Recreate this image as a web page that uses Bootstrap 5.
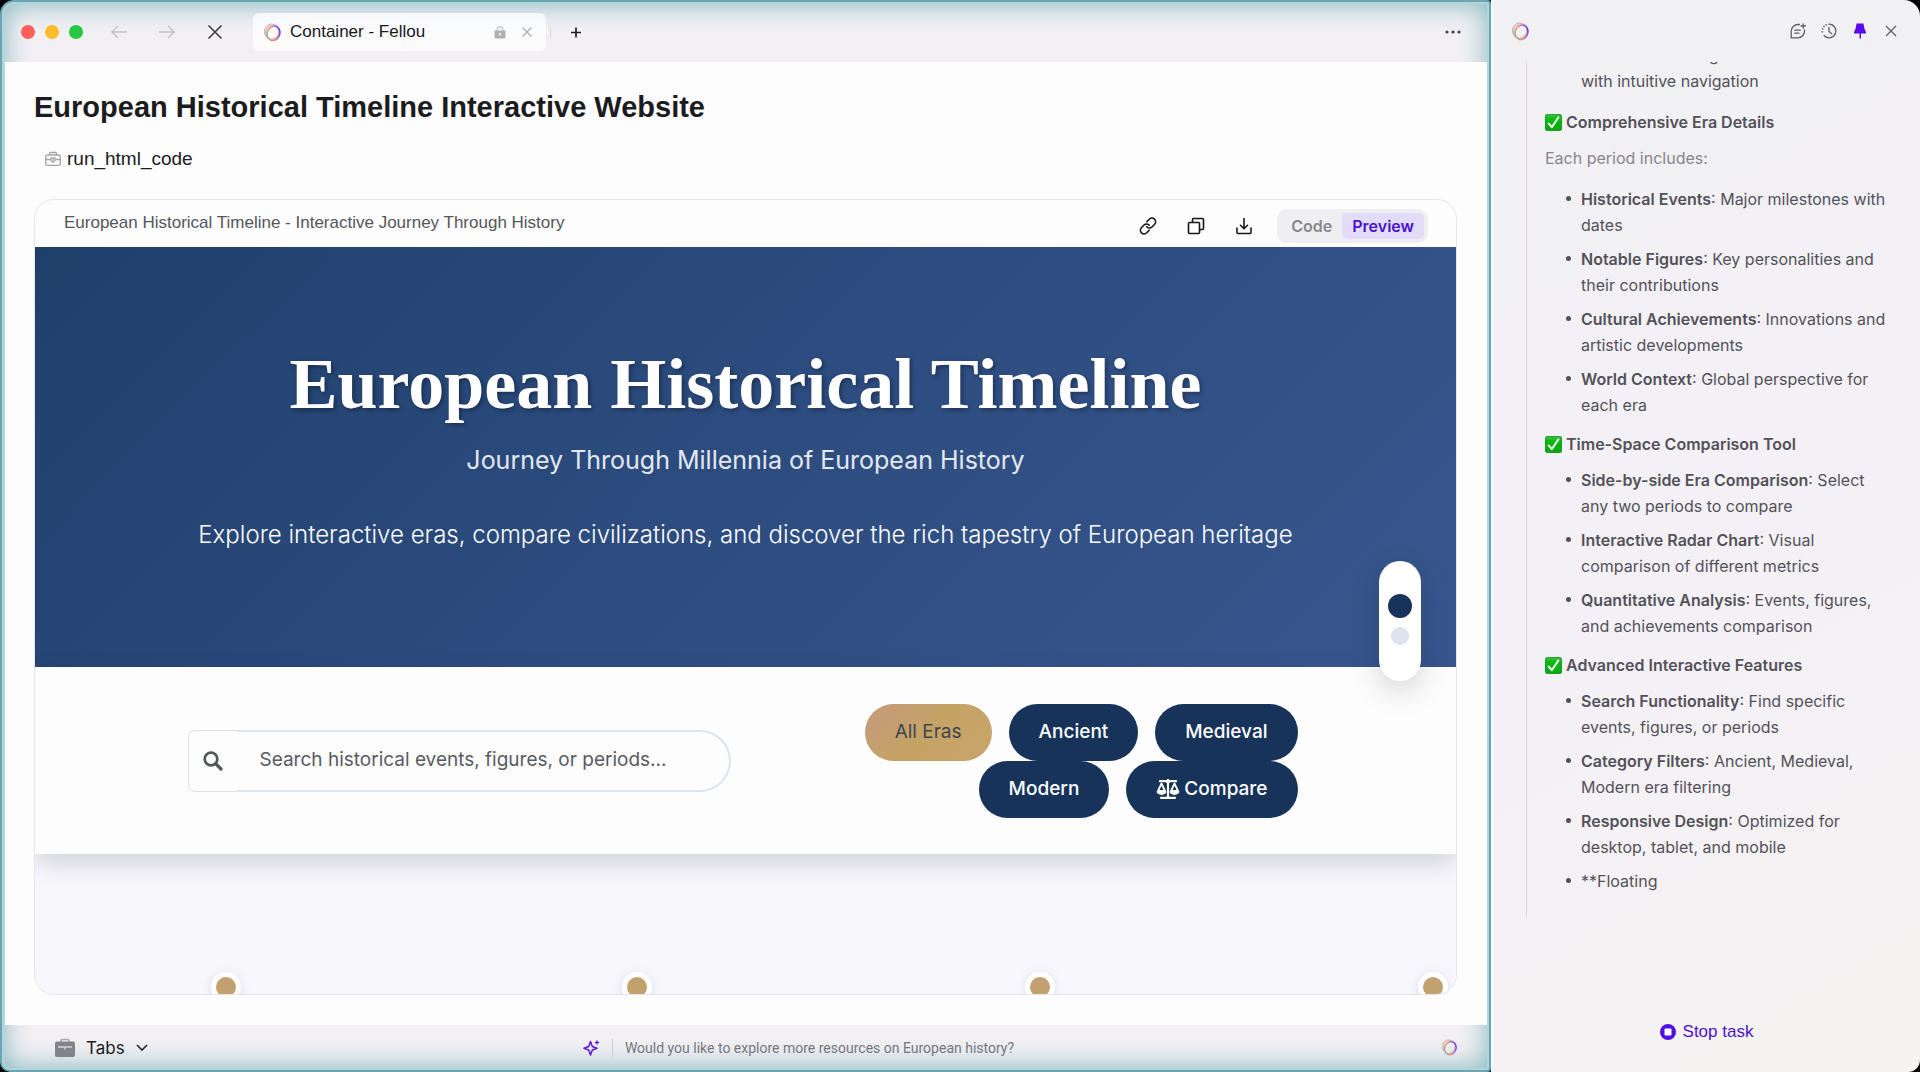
<!DOCTYPE html>
<html lang="en">
<head>
<meta charset="utf-8">
<meta name="viewport" content="width=device-width, initial-scale=1">
<title>Container - Fellou</title>
<link href="https://cdn.jsdelivr.net/npm/bootstrap@5.3.0/dist/css/bootstrap.min.css" rel="stylesheet">
<style>
  :root { --teal: #66a7b4; --navy: #18335a; --violet: #4a12cf; --ui: "Liberation Sans", Arial, sans-serif; --inter: Inter, "Noto Sans", sans-serif; }
  body { background: #000; font-family: var(--ui); color: #1b1b20; }
  button { font-family: inherit; }
  .shell { height: 100vh; }
  svg { display: block; flex: none; }
  .plain { border: 0; background: none; padding: 0; color: inherit; display: flex; align-items: center; justify-content: center; }

  /* browser window */
  .window { border: 2px solid var(--teal); border-radius: 14px 4px 4px 10px; background: #f2f0f3; box-shadow: inset 0 0 0 2px #b7d3d7, inset 0 0 26px 3px #86b9c2; padding: 0 2px 0 3px; }
  .topbar { height: 60px; padding: 0 26px 0 16px; }
  .lights { gap: 10px; }
  .lights i { width: 14px; height: 14px; border-radius: 50%; }
  .nav-icons { gap: 32px; margin-left: 28px; }
  .tab-item { width: 293px; height: 38px; margin-left: 30px; padding: 0 14px 0 10px; border-radius: 6px; background: rgba(255,255,255,.75); font-size: 17px; color: #17171c; }
  .tab-sep { width: 1px; height: 12px; background: #dcdade; margin: 0 18px 0 4px; }
  .viewport { background: #fdfdfd; padding: 27px 30px 30px 29px; }
  .page-title { font-size: 29px; line-height: 36px; font-weight: 700; margin: 0 0 21px; }
  .tool-line { font-size: 19px; line-height: 26px; gap: 6px; padding-left: 11px; margin-bottom: 27px; }

  /* preview frame */
  .frame { border: 1px solid #e6e6ea; border-radius: 20px; background: #fdfdfd; }
  .frame-head { height: 47px; padding: 0 28px 0 29px; flex: none; }
  .frame-name { font-size: 17px; color: #55555c; padding-bottom: 2px; }
  .frame-tools { gap: 30px; padding-top: 4px; }
  .toggle { background: #efeff2; border-radius: 10px; padding: 4px; margin-left: -6px; height: 34px; }
  .toggle .btn { border: 0; font: 600 16px/24px var(--inter); padding: 1px 10px; color: #88888f; border-radius: 5px; }
  .toggle .btn.active { background: #e2dcfa; color: var(--violet); }

  .hero { height: 420px; padding-bottom: 24px; flex: none; background: linear-gradient(135deg, #1f3f6b 0%, #2a4a7c 40%, #38578f 100%); color: #fff; font-family: var(--inter); text-align: center; }
  .hero h2 { font: 700 72px/90px "Liberation Serif", "Times New Roman", serif; margin: 0 0 14px; text-shadow: 2px 2px 4px rgba(0,0,0,.35); }
  .hero-sub { font-size: 25px; line-height: 34px; font-weight: 400; color: #e4e8f0; margin: 0 0 41px; }
  .hero-text { font-size: 24px; line-height: 34px; font-weight: 300; margin: 0; }
  .float-nav { position: absolute; right: 35px; bottom: -14px; width: 42px; height: 120px; padding-bottom: 3px; border-radius: 21px; background: #fff; box-shadow: 0 10px 30px rgba(0,0,0,.16); gap: 9px; z-index: 2; }
  .float-nav button { width: 18px; height: 18px; border-radius: 50%; border: 0; padding: 0; background: #dde4ee; }
  .float-nav button.on { width: 24px; height: 24px; background: var(--navy); }

  .controls { height: 187px; flex: none; padding: 0 30px 0 24px; background: #fdfdfe; box-shadow: 0 10px 24px rgba(40,40,70,.18); font-family: var(--inter); z-index: 1; }
  .controls-in { max-width: 1110px; gap: 24px; }
  .search { height: 62px; }
  .search .input-group-text { width: 49px; justify-content: center; background: #fdfdfe; border: 1px solid #e0e1e7; border-right: 0; border-radius: 7px 0 0 7px; color: #55575e; padding: 0; }
  .search .form-control { border: 2px solid #dde4ee; border-left: 0; border-radius: 0 31px 31px 0; padding: 0 23px; font-size: 19px; margin-left: 0 !important; background: #fdfdfe; }
  .search .form-control::placeholder { color: #585b61; opacity: 1; }
  .filters { column-gap: 17px; }
  .filters .btn { height: 57px; border: 0; border-radius: 29px; padding: 0 30px; background: var(--navy); color: #fff; font: 500 19px/28px var(--inter); }
  .filters .btn.gold { background: linear-gradient(135deg, #c49a7d, #c5a365 50%, #c8a469); color: #3d4651; font-weight: 400; }

  .track { background: #f8f8fc; display: grid; grid-template-columns: 411fr 402fr 393fr 38fr; align-items: end; padding-left: 176px; }
  .track i { width: 30px; height: 30px; border-radius: 50%; background: #c3a06f; border: 5px solid #fff; box-shadow: 0 2px 12px rgba(90,80,160,.18); margin-bottom: -8px; }

  .dock { height: 45px; padding: 0 29px 0 50px; display: grid; grid-template-columns: 1fr auto 1fr; align-items: center; }
  .dock-tabs { gap: 11px; font: 400 17px/24px var(--inter); }
  .dock-tip { gap: 12px; font: 400 14px/24px Roboto, sans-serif; color: #77767e; margin-left: 84px; }
  .dock-tip b { width: 1px; height: 18px; background: #cfccd4; }

  /* assistant panel */
  .assistant { width: 429px; border-left: 2px solid #f9f8fa; border-radius: 0 16px 12px 0; background: linear-gradient(150deg, #f1f0f2, #f3f1f6 50%, #f6f3f2); font-family: var(--inter); color: #535159; }
  .as-head { height: 62px; padding: 0 21px 0 18px; color: #5f5d68; }
  .as-icons { gap: 15px; }
  .as-log { margin-left: 33px; padding: 0 26px 23px 18px; border-left: 1px solid #d9cdf0; min-height: 0; }
  .as-log h3 { font-size: 16px; line-height: 26px; font-weight: 600; gap: 4px; margin: 13px 0 10px; display: flex; align-items: center; }
  .as-log p { font-size: 16px; line-height: 26px; margin: 0 0 15px; color: #88868c; }
  .as-log ul { margin: 0; padding-left: 36px; font-size: 16px; line-height: 26px; list-style: none; }
  .as-log li { position: relative; margin-bottom: 8px; }
  .as-log li:last-child { margin-bottom: 0; }
  .as-log ul.dots li::before { content: ""; position: absolute; left: -15px; top: 10px; width: 5px; height: 5px; border-radius: 50%; background: #535159; }
  .as-log strong { font-weight: 600; }
  .as-log ul.carry { margin-bottom: 2px; }
  .cut { padding-left: 128px; display: block; }
  .as-foot { height: 155px; padding-bottom: 27px; }
  .stop { font: 400 17px/26px var(--ui); color: var(--violet); gap: 7px; }
</style>
<script src="https://cdn.jsdelivr.net/npm/bootstrap@5.3.0/dist/js/bootstrap.bundle.min.js"></script>
</head>
<body>
<svg width="0" height="0" class="position-absolute" aria-hidden="true">
  <defs>
    <linearGradient id="lg" x1="1" y1="0" x2="0" y2="1"><stop offset="0" stop-color="#5a14d0"/><stop offset=".35" stop-color="#a274dc"/><stop offset=".65" stop-color="#ee9a62"/><stop offset="1" stop-color="#4cc0ec"/></linearGradient>
    <linearGradient id="gr" x1="0" y1="0" x2="0" y2="1"><stop offset="0" stop-color="#3bbf45"/><stop offset=".3" stop-color="#06b90c"/><stop offset="1" stop-color="#08a812"/></linearGradient>
    <symbol id="logo" viewBox="0 0 20 20"><g fill="none"><ellipse cx="9" cy="9" rx="7.6" ry="8" stroke="#b8a9bb" stroke-width=".9"/><ellipse cx="9.6" cy="9.6" rx="7" ry="8" transform="rotate(25 10 10)" stroke="#e7b08e" stroke-width="1"/><ellipse cx="11" cy="10.8" rx="6.6" ry="7.8" transform="rotate(22 11 10.8)" stroke="url(#lg)" stroke-width="1.7"/></g></symbol>
    <symbol id="tick" viewBox="0 0 17 17"><rect width="17" height="17" rx="2.5" fill="#1f9a2b"/><rect x=".8" y=".8" width="15.4" height="15.4" rx="2" fill="url(#gr)"/><path d="M3.6 9.4 6.8 13.2 13.4 3.4" fill="none" stroke="#fff" stroke-width="1.9" stroke-linecap="round" stroke-linejoin="round"/></symbol>
  </defs>
</svg>
<div class="shell d-flex overflow-hidden">
  <main class="window flex-grow-1 d-flex flex-column overflow-hidden">
    <header class="topbar d-flex align-items-center flex-shrink-0">
      <div class="lights d-flex"><i style="background:#fe5f57"></i><i style="background:#fdbc2e"></i><i style="background:#27c840"></i></div>
      <nav class="nav-icons d-flex align-items-center">
        <button class="plain" aria-label="Back"><svg width="16" height="16" fill="none" stroke="#c3c1c6" stroke-width="1.4"><path d="M16 8H1M7 2 1 8l6 6"/></svg></button>
        <button class="plain" aria-label="Forward"><svg width="16" height="16" fill="none" stroke="#c3c1c6" stroke-width="1.4"><path d="M0 8h15M9 2l6 6-6 6"/></svg></button>
        <button class="plain" aria-label="Stop loading"><svg width="16" height="16" fill="none" stroke="#3f3e44" stroke-width="1.6"><path d="m1.500 1.500 13 13m0-13-13 13"/></svg></button>
      </nav>
      <div class="tab-item d-flex align-items-center">
        <svg width="19" height="19" class="me-2"><use href="#logo"/></svg>
        <span class="flex-grow-1">Container - Fellou</span>
        <svg width="12" height="13" class="me-3" viewBox="0 0 12 13"><rect x=".5" y="4.500" width="11" height="8" rx="1" fill="#b3b0b4"/><path d="M3 5V3.500a3 3 0 0 1 6 0V5" fill="none" stroke="#b3b0b4"/><path d="M6 7v3M5 8h2" stroke="#fff"/></svg>
        <button class="plain" aria-label="Close tab"><svg width="10" height="10" fill="none" stroke="#aaa8ad" stroke-width="1.2"><path d="m.5.5 9 9m0-9-9 9"/></svg></button>
      </div>
      <span class="tab-sep"></span>
      <button class="plain" aria-label="New tab"><svg width="14" height="14" viewBox="0 0 14 14" fill="none" stroke="#222127" stroke-width="1.700"><path d="M7 2.500v10M2 7.500h10"/></svg></button>
      <button class="plain ms-auto" aria-label="More"><svg width="16" height="6" fill="#46454b"><circle cx="2" cy="3" r="1.600"/><circle cx="8" cy="3" r="1.600"/><circle cx="14" cy="3" r="1.600"/></svg></button>
    </header>

    <section class="viewport flex-grow-1 d-flex flex-column overflow-hidden">
      <h1 class="page-title">European Historical Timeline Interactive Website</h1>
      <div class="tool-line d-flex align-items-center">
        <svg width="16" height="16" viewBox="0 0 16 16" fill="none" stroke="#a5a3a8" stroke-width="1.300"><rect x=".7" y="4" width="14.600" height="10.300" rx="1.500"/><path d="M4.500 4V2.500a1 1 0 0 1 1-1h5a1 1 0 0 1 1 1V4M1 8.500h4.500m5 0H15"/><path d="M6 7h4v2.500l-2 1.700-2-1.700zM8 8v1.500"/></svg>
        <span>run_html_code</span>
      </div>

      <article class="frame flex-grow-1 d-flex flex-column overflow-hidden">
        <div class="frame-head d-flex align-items-center justify-content-between">
          <span class="frame-name">European Historical Timeline - Interactive Journey Through History</span>
          <div class="frame-tools d-flex align-items-center">
            <button class="plain" aria-label="Copy link"><svg width="18" height="18" viewBox="0 0 18 18" fill="none" stroke="#17171b" stroke-width="1.600" stroke-linecap="round"><path d="M7.800 4.800 10.300 2.300a3.600 3.600 0 0 1 5.300 5L13 10a3.600 3.600 0 0 1-5.300-.2"/><path d="M10.200 13.200 7.700 15.700a3.600 3.600 0 0 1-5.300-5L5 8a3.600 3.600 0 0 1 5.300.2"/></svg></button>
            <button class="plain" aria-label="Duplicate"><svg width="18" height="18" viewBox="0 0 18 18" fill="none" stroke="#17171b" stroke-width="1.600"><rect x="1.500" y="5.500" width="11" height="11" rx="1"/><path d="M5.500 5V2.500a1 1 0 0 1 1-1h9a1 1 0 0 1 1 1v9a1 1 0 0 1-1 1H13"/></svg></button>
            <button class="plain" aria-label="Download"><svg width="18" height="18" viewBox="0 0 18 18" fill="none" stroke="#17171b" stroke-width="1.600" stroke-linecap="round"><path d="M9 1.500v10M5.500 8.300 9 11.700l3.500-3.400M2 11v4.500a1 1 0 0 0 1 1h12a1 1 0 0 0 1-1V11"/></svg></button>
            <div class="toggle d-flex"><button class="btn">Code</button><button class="btn active">Preview</button></div>
          </div>
        </div>
        <div class="hero position-relative d-flex flex-column justify-content-center">
          <h2>European Historical Timeline</h2>
          <p class="hero-sub">Journey Through Millennia of European History</p>
          <p class="hero-text">Explore interactive eras, compare civilizations, and discover the rich tapestry of European heritage</p>
          <div class="float-nav d-flex flex-column align-items-center justify-content-center">
            <button class="on" aria-label="Section 1"></button><button aria-label="Section 2"></button>
          </div>
        </div>
        <div class="controls position-relative d-flex align-items-center">
          <div class="controls-in d-flex align-items-center w-100 mx-auto">
            <div class="w-50">
              <div class="input-group search">
                <label class="input-group-text" for="q" aria-label="Search"><svg width="20" height="20" viewBox="0 0 20 20" fill="none" stroke="currentColor"><circle cx="8" cy="8" r="6.300" stroke-width="2.700"/><path d="m13 13 5 5" stroke-width="3.200" stroke-linecap="round"/></svg></label>
                <input id="q" type="text" class="form-control" placeholder="Search historical events, figures, or periods...">
              </div>
            </div>
            <div class="filters w-50 d-flex flex-wrap justify-content-end">
              <button class="btn gold">All Eras</button>
              <button class="btn">Ancient</button>
              <button class="btn">Medieval</button>
              <button class="btn">Modern</button>
              <button class="btn d-flex align-items-center gap-1"><svg width="24" height="20" viewBox="0 0 24 20" fill="none" stroke="#fff" stroke-width="1.800"><path d="M4 2.200h16M12 1v17M5 18.800h14" stroke-width="2.200" stroke-linecap="round"/><path d="M5.500 4.500 2 12h7zM18.500 4.500 15 12h7z" stroke-linejoin="round"/><path d="M.5 12.300h10a5 3.600 0 0 1-10 0zM13.500 12.300h10a5 3.600 0 0 1-10 0z" fill="#fff" stroke="none"/><circle cx="12" cy="2.500" r="2" fill="#fff" stroke="none"/></svg>Compare</button>
            </div>
          </div>
        </div>
        <div class="track flex-grow-1"><i></i><i></i><i></i><i></i></div>
      </article>
    </section>

    <footer class="dock flex-shrink-0">
      <button class="plain dock-tabs justify-content-start"><svg width="20" height="20" viewBox="0 0 20 20"><path d="M6 4V2.500a1 1 0 0 1 1-1h6a1 1 0 0 1 1 1V4" fill="none" stroke="#aaa8af" stroke-width="1.500"/><rect y="3.500" width="20" height="15.500" rx="2" fill="#84838c"/><path d="M3 9h14M10 9v2.500" stroke="#d6d5da" stroke-width="1.400"/></svg>Tabs<svg width="12" height="8" fill="none" stroke="#26262c" stroke-width="1.600"><path d="m1 1 5 5 5-5"/></svg></button>
      <div class="dock-tip d-flex align-items-center"><svg width="17" height="17" viewBox="0 0 17 17"><path d="M7.500 2.500 9.300 7.500 14 9.300 9.300 11 7.500 16 5.700 11 1 9.300 5.700 7.500z" fill="none" stroke="#5a16d6" stroke-width="1.500" stroke-linejoin="round"/><path d="M14 .5 14.800 2.700 17 3.500 14.800 4.300 14 6.500 13.200 4.300 11 3.500 13.200 2.700z" fill="#5a16d6"/></svg><b></b><span>Would you like to explore more resources on European history?</span></div>
      <svg width="17" height="17" class="ms-auto"><use href="#logo"/></svg>
    </footer>
  </main>

  <aside class="assistant flex-shrink-0 d-flex flex-column overflow-hidden">
    <div class="as-head d-flex align-items-center justify-content-between flex-shrink-0">
      <svg width="19" height="19"><use href="#logo"/></svg>
      <div class="as-icons d-flex align-items-center">
        <button class="plain" aria-label="New chat"><svg width="16" height="16" viewBox="0 0 16 16" fill="none" stroke="currentColor" stroke-width="1.300" stroke-linecap="round"><path d="M9.500 1.500H8A6.700 6.700 0 0 0 1.200 8.200V14.800H8A6.600 6.600 0 0 0 14.500 8V7M4.800 7.200h5.500M4.800 10.200h4M13.200.8v4.400M11 3h4.400"/></svg></button>
        <button class="plain" aria-label="History"><svg width="16" height="16" viewBox="0 0 16 16" fill="none" stroke="currentColor" stroke-width="1.300" stroke-linecap="round"><path d="M8 1.200a6.800 6.800 0 1 1-4.800 11.600M8 4.500V8.500l2.700 2.200"/><path d="M5.300 1.800A6.800 6.800 0 0 0 2 11" stroke-dasharray=".1 2.700" stroke-width="1.600"/></svg></button>
        <button class="plain" aria-label="Unpin"><svg width="16" height="16" viewBox="0 0 16 16" fill="#5b08ee"><path d="M4.500.5h7l.7 4.500 1.800 4.200v1.300H9V15.500H7.600V10.500H2V9.200L3.800 5z"/></svg></button>
        <button class="plain" aria-label="Close"><svg width="16" height="16" fill="none" stroke="currentColor" stroke-width="1.300"><path d="m3 3 10 10m0-10L3 13"/></svg></button>
      </div>
    </div>
    <div class="as-log flex-grow-1 overflow-hidden d-flex flex-column justify-content-end">
      <ul class="carry"><li><span class="cut">g</span>with intuitive navigation</li></ul>
      <h3><svg width="17" height="17"><use href="#tick"/></svg>Comprehensive Era Details</h3>
      <p>Each period includes:</p>
      <ul class="dots">
        <li><strong>Historical Events</strong>: Major milestones with dates</li>
        <li><strong>Notable Figures</strong>: Key personalities and their contributions</li>
        <li><strong>Cultural Achievements</strong>: Innovations and artistic developments</li>
        <li><strong>World Context</strong>: Global perspective for each era</li>
      </ul>
      <h3><svg width="17" height="17"><use href="#tick"/></svg>Time-Space Comparison Tool</h3>
      <ul class="dots">
        <li><strong>Side-by-side Era Comparison</strong>: Select any two periods to compare</li>
        <li><strong>Interactive Radar Chart</strong>: Visual comparison of different metrics</li>
        <li><strong>Quantitative Analysis</strong>: Events, figures, and achievements comparison</li>
      </ul>
      <h3><svg width="17" height="17"><use href="#tick"/></svg>Advanced Interactive Features</h3>
      <ul class="dots">
        <li><strong>Search Functionality</strong>: Find specific events, figures, or periods</li>
        <li><strong>Category Filters</strong>: Ancient, Medieval, Modern era filtering</li>
        <li><strong>Responsive Design</strong>: Optimized for desktop, tablet, and mobile</li>
        <li>**Floating</li>
      </ul>
    </div>
    <div class="as-foot flex-shrink-0 d-flex align-items-end justify-content-center">
      <button class="plain stop"><svg width="16" height="16"><circle cx="8" cy="8" r="8" fill="#5010e4"/><rect x="4.500" y="4.500" width="7" height="7" rx="1" fill="#fff"/></svg>Stop task</button>
    </div>
  </aside>
</div>
</body>
</html>
